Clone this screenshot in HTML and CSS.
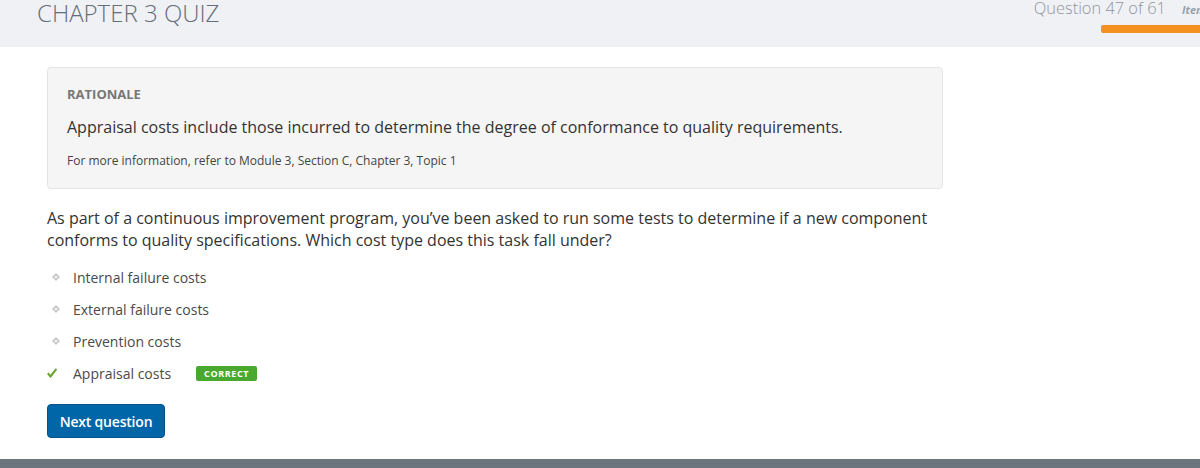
FILE: index.html
```html
<!DOCTYPE html>
<html>
<head>
<meta charset="utf-8">
<link rel="stylesheet" href="styles.css">
</head>
<body>
<header class="topbar">
  <h1 class="title">CHAPTER 3 QUIZ</h1>
  <div class="progress">
    <div class="progress-row">
      <span class="counter">Question 47 of 61</span>
      <span class="item">Item</span>
    </div>
    <div class="bar"></div>
  </div>
</header>
<main class="content">
  <section class="rationale">
    <div class="rat-label">RATIONALE</div>
    <p class="rat-text">Appraisal costs include those incurred to determine the degree of conformance to quality requirements.</p>
    <p class="rat-ref">For more information, refer to Module 3, Section C, Chapter 3, Topic 1</p>
  </section>
  <p class="question">As part of a continuous improvement program, you’ve been asked to run some tests to determine if a new component conforms to quality specifications. Which cost type does this task fall under?</p>
  <ul class="options">
    <li class="opt"><span class="mark"><svg width="8" height="8" viewBox="0 0 8 8"><path d="M4 0 L8 4 L4 8 L0 4 Z M4 2.6 L2.6 4 L4 5.4 L5.4 4 Z" fill="#c8c8c8" fill-rule="evenodd"/></svg></span>Internal failure costs</li>
    <li class="opt"><span class="mark"><svg width="8" height="8" viewBox="0 0 8 8"><path d="M4 0 L8 4 L4 8 L0 4 Z M4 2.6 L2.6 4 L4 5.4 L5.4 4 Z" fill="#c8c8c8" fill-rule="evenodd"/></svg></span>External failure costs</li>
    <li class="opt"><span class="mark"><svg width="8" height="8" viewBox="0 0 8 8"><path d="M4 0 L8 4 L4 8 L0 4 Z M4 2.6 L2.6 4 L4 5.4 L5.4 4 Z" fill="#c8c8c8" fill-rule="evenodd"/></svg></span>Prevention costs</li>
    <li class="opt"><span class="mark"><svg width="10" height="10" viewBox="0 0 10 10"><path d="M0.8 5.2 L3.6 8.4 L9.4 0.8" fill="none" stroke="#6aa532" stroke-width="2.2"/></svg></span>Appraisal costs<span class="badge">CORRECT</span></li>
  </ul>
  <button class="next">Next question</button>
</main>
<footer class="bottombar"></footer>
</body>
</html>
```
FILE: styles.css
```css
* { box-sizing: border-box; }
html, body { margin: 0; padding: 0; }
body {
  width: 1200px;
  height: 468px;
  overflow: hidden;
  background: #fff;
  font-family: "Open Sans", "Liberation Sans", sans-serif;
  color: #333;
  display: flex;
  flex-direction: column;
}
.topbar {
  height: 47px;
  background: #f0f1f5;
  display: flex;
  justify-content: space-between;
  align-items: flex-start;
  padding-left: 37px;
  flex-shrink: 0;
}
.title {
  margin: 0;
  margin-top: -3px;
  font-size: 24px;
  font-weight: 300;
  color: #646e78;
  line-height: 32px;
}
.progress {
  display: flex;
  flex-direction: column;
  align-items: flex-end;
  margin-right: -6px;
}
.progress-row {
  display: flex;
  align-items: baseline;
  gap: 16px;
  margin-top: -4px;
  height: 24px;
  white-space: nowrap;
}
.counter {
  font-size: 16.4px;
  font-weight: 300;
  color: #8f959c;
}
.item {
  font-size: 11px;
  font-style: italic;
  font-weight: 700;
  color: #9aa0a6;
}
.bar {
  margin-top: 5px;
  width: 105px;
  height: 8px;
  background: #f39020;
  border-radius: 2px 0 0 2px;
}
.content {
  flex: 1;
  padding: 20px 0 0 47px;
}
.rationale {
  width: 896px;
  height: 122px;
  background: #f5f5f5;
  border: 1px solid #e4e4e4;
  border-radius: 4px;
  padding: 18px 19px 0 19px;
}
.rat-label {
  font-size: 13px;
  font-weight: 700;
  color: #777;
  line-height: 17px;
}
.rat-text {
  margin: 13px 0 0;
  font-size: 16px;
  line-height: 22px;
  color: #333;
}
.rat-ref {
  margin: 14px 0 0;
  font-size: 12px;
  line-height: 18px;
  color: #444;
}
.question {
  margin: 18px 0 0;
  width: 900px;
  font-size: 16px;
  line-height: 22px;
  color: #333;
}
.options {
  list-style: none;
  margin: 10px 0 0;
  padding: 0;
}
.opt {
  display: flex;
  align-items: center;
  height: 32px;
  font-size: 14px;
  color: #4a4a4a;
}
.mark {
  width: 26px;
  display: flex;
  align-items: center;
  padding-left: 5px;
}
.opt:last-child .mark { padding-left: 0; }
.badge {
  margin-left: 25px;
  background: #48a82f;
  color: #fff;
  font-size: 9px;
  font-weight: 700;
  letter-spacing: 0.6px;
  line-height: 15px;
  height: 15px;
  padding: 0 8px;
  border-radius: 2px;
}
.next {
  margin-top: 15px;
  width: 118px;
  height: 34px;
  background: #0066a8;
  border: 1px solid #05518a;
  border-radius: 4px;
  color: #fff;
  font-family: "Open Sans", "Liberation Sans", sans-serif;
  font-size: 14px;
  font-weight: 600;
  letter-spacing: -0.2px;
  padding: 0;
}
.bottombar {
  height: 9px;
  background: #6b757e;
  flex-shrink: 0;
}
```
